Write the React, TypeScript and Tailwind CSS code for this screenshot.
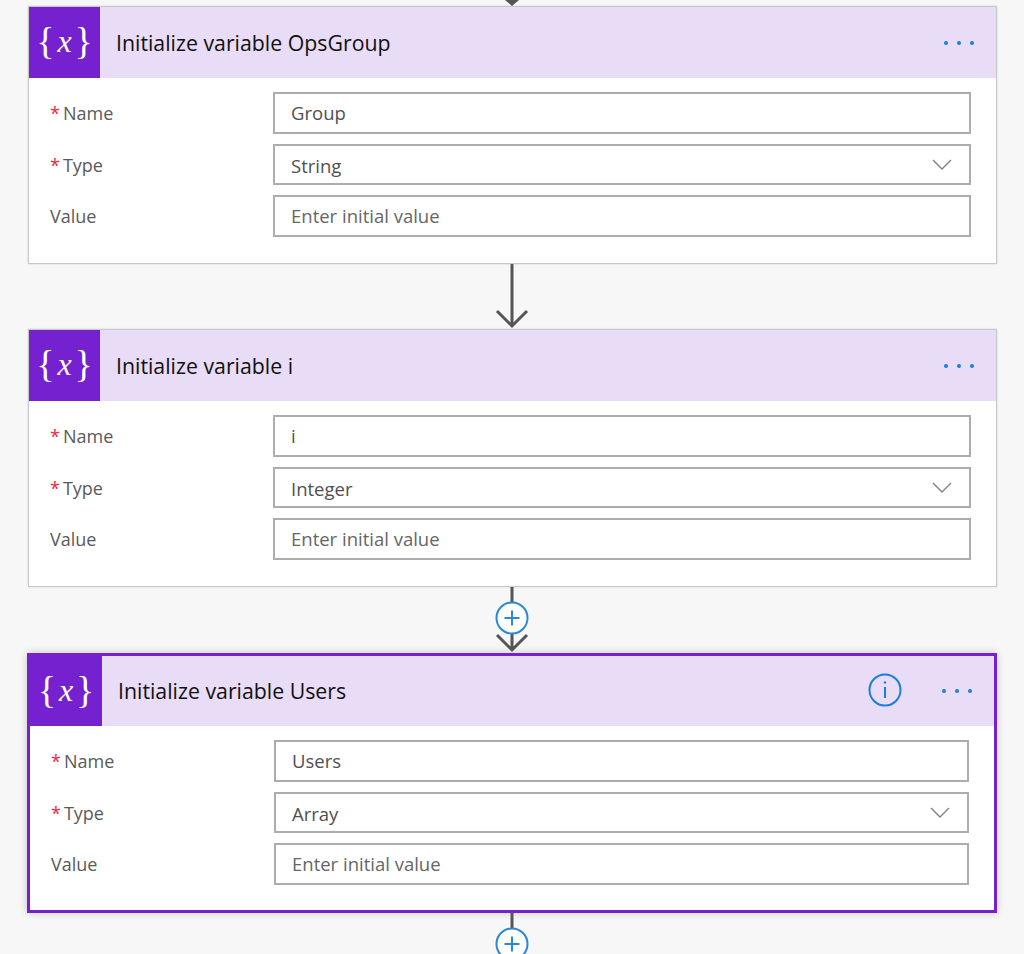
const fieldFont = "font-['Open_Sans','Noto_Sans',sans-serif]";

function VariableIcon({ wide }: { wide?: boolean }) {
  return (
    <div
      className={
        wide
          ? "flex h-full w-[72px] shrink-0 items-center justify-center bg-[#7521cf] pb-[3px] text-white"
          : "flex h-full w-[71px] shrink-0 items-center justify-center bg-[#7521cf] pb-[3px] text-white"
      }
    >
      <span className="font-['Liberation_Serif',serif] text-[38px] font-light leading-none">{"{"}</span>
      <span className="mx-[3px] font-['Liberation_Serif',serif] text-[32px] italic leading-none">x</span>
      <span className="font-['Liberation_Serif',serif] text-[38px] font-light leading-none">{"}"}</span>
    </div>
  );
}

function Field({
  label,
  value,
  placeholder,
  required,
  select,
}: {
  label: string;
  value?: string;
  placeholder?: string;
  required?: boolean;
  select?: boolean;
}) {
  return (
    <div className="flex items-center">
      <div
        className={
          select
            ? "w-[244px] shrink-0 pl-[21px] pt-[2px] text-[18px] text-[#5a5a5a]"
            : "w-[244px] shrink-0 pl-[21px] pt-[1px] text-[18px] text-[#5a5a5a]"
        }
      >
        {required && <span className="mr-[3px] text-[#f0263f]">*</span>}
        {label}
      </div>
      <div className="flex h-[41.5px] flex-1 items-center justify-between border-2 border-[#adadad] bg-white pl-[16px] pr-[17px] text-[18.5px] text-[#505050]">
        <span className={placeholder ? "pt-[1px] text-[#666666]" : select ? "pt-[3px]" : "pt-[1px]"}>
          {value ?? placeholder}
        </span>
        {select && (
          <svg width="20" height="11" viewBox="0 0 20 11" fill="none" stroke="#808080" strokeWidth="1.4">
            <path d="M1 1l9 9 9-9" />
          </svg>
        )}
      </div>
    </div>
  );
}

function Card({
  title,
  name,
  type,
  active,
}: {
  title: string;
  name: string;
  type: string;
  active?: boolean;
}) {
  return (
    <div
      className={
        active
          ? "ml-[27px] w-[970px] border-[3px] border-[#7521cf] bg-white pb-[25.5px] shadow-[0_0_8px_rgba(0,0,0,0.2)]"
          : "ml-[28px] w-[969px] border border-[#c8c8c8] bg-white pb-[26.5px] shadow-[0_0_2px_rgba(0,0,0,0.15)]"
      }
    >
      <div className={active ? "flex h-[70px] items-center bg-[#e9dcf7]" : "flex h-[71px] items-center bg-[#e9dcf7]"}>
        <VariableIcon wide={active} />
        <div
          className={
            active
              ? "ml-[16px] flex-1 text-[21.3px] text-[#111111]"
              : "ml-[16px] flex-1 pt-[1px] text-[21.3px] text-[#111111]"
          }
        >
          {title}
        </div>
        {active && (
          <svg className="mb-[2px] mr-[40px]" width="34" height="34" viewBox="0 0 34 34" fill="none" stroke="#1a7fd6">
            <circle cx="17" cy="17" r="15.5" strokeWidth="2" />
            <path d="M17 14v11" strokeWidth="2" />
            <circle cx="17" cy="9.5" r="1.2" fill="#1a7fd6" stroke="none" />
          </svg>
        )}
        <div className="mr-[22px] flex gap-[9px]">
          <span className="size-[4px] rounded-full bg-[#1a7fd6]" />
          <span className="size-[4px] rounded-full bg-[#1a7fd6]" />
          <span className="size-[4px] rounded-full bg-[#1a7fd6]" />
        </div>
      </div>
      <div className={active ? "flex flex-col gap-[10px] pr-[25px] pt-[14px]" : "flex flex-col gap-[10px] pr-[25px] pt-[14px]"}>
        <Field label="Name" value={name} required />
        <Field label="Type" value={type} required select />
        <Field label="Value" placeholder="Enter initial value" />
      </div>
    </div>
  );
}

function Arrow() {
  return (
    <div className="flex h-[65px] justify-center">
      <svg width="34" height="65" viewBox="0 0 34 65" fill="none" stroke="#555555" strokeWidth="3">
        <path d="M17 0v62M2 47l15 15 15-15" />
      </svg>
    </div>
  );
}

function PlusButton() {
  return (
    <svg className="absolute left-1/2 top-[14px] -translate-x-1/2" width="34" height="34" viewBox="0 0 34 34" fill="none">
      <circle cx="17" cy="17" r="15.5" fill="#ffffff" stroke="#2b88d8" strokeWidth="2" />
      <path d="M9.5 17h15M17 9.5v15" stroke="#2b88d8" strokeWidth="2" />
    </svg>
  );
}

export default function App() {
  return (
    <div className={`h-[954px] overflow-hidden bg-[#f7f7f7] ${fieldFont}`}>
      <div className="flex h-[6px] justify-center">
        <svg width="16" height="6" viewBox="0 0 16 6" fill="#555555">
          <path d="M1 0h14L8 6z" />
        </svg>
      </div>
      <Card title="Initialize variable OpsGroup" name="Group" type="String" />
      <Arrow />
      <Card title="Initialize variable i" name="i" type="Integer" />
      <div className="relative flex h-[66px] justify-center">
        <svg width="34" height="66" viewBox="0 0 34 66" fill="none" stroke="#555555" strokeWidth="3">
          <path d="M17 0v63M2 48l15 15 15-15" />
        </svg>
        <PlusButton />
      </div>
      <Card title="Initialize variable Users" name="Users" type="Array" active />
      <div className="relative flex h-[41px] justify-center">
        <svg width="34" height="20" viewBox="0 0 34 20" fill="none" stroke="#555555" strokeWidth="3">
          <path d="M17 0v20" />
        </svg>
        <PlusButton />
      </div>
    </div>
  );
}
